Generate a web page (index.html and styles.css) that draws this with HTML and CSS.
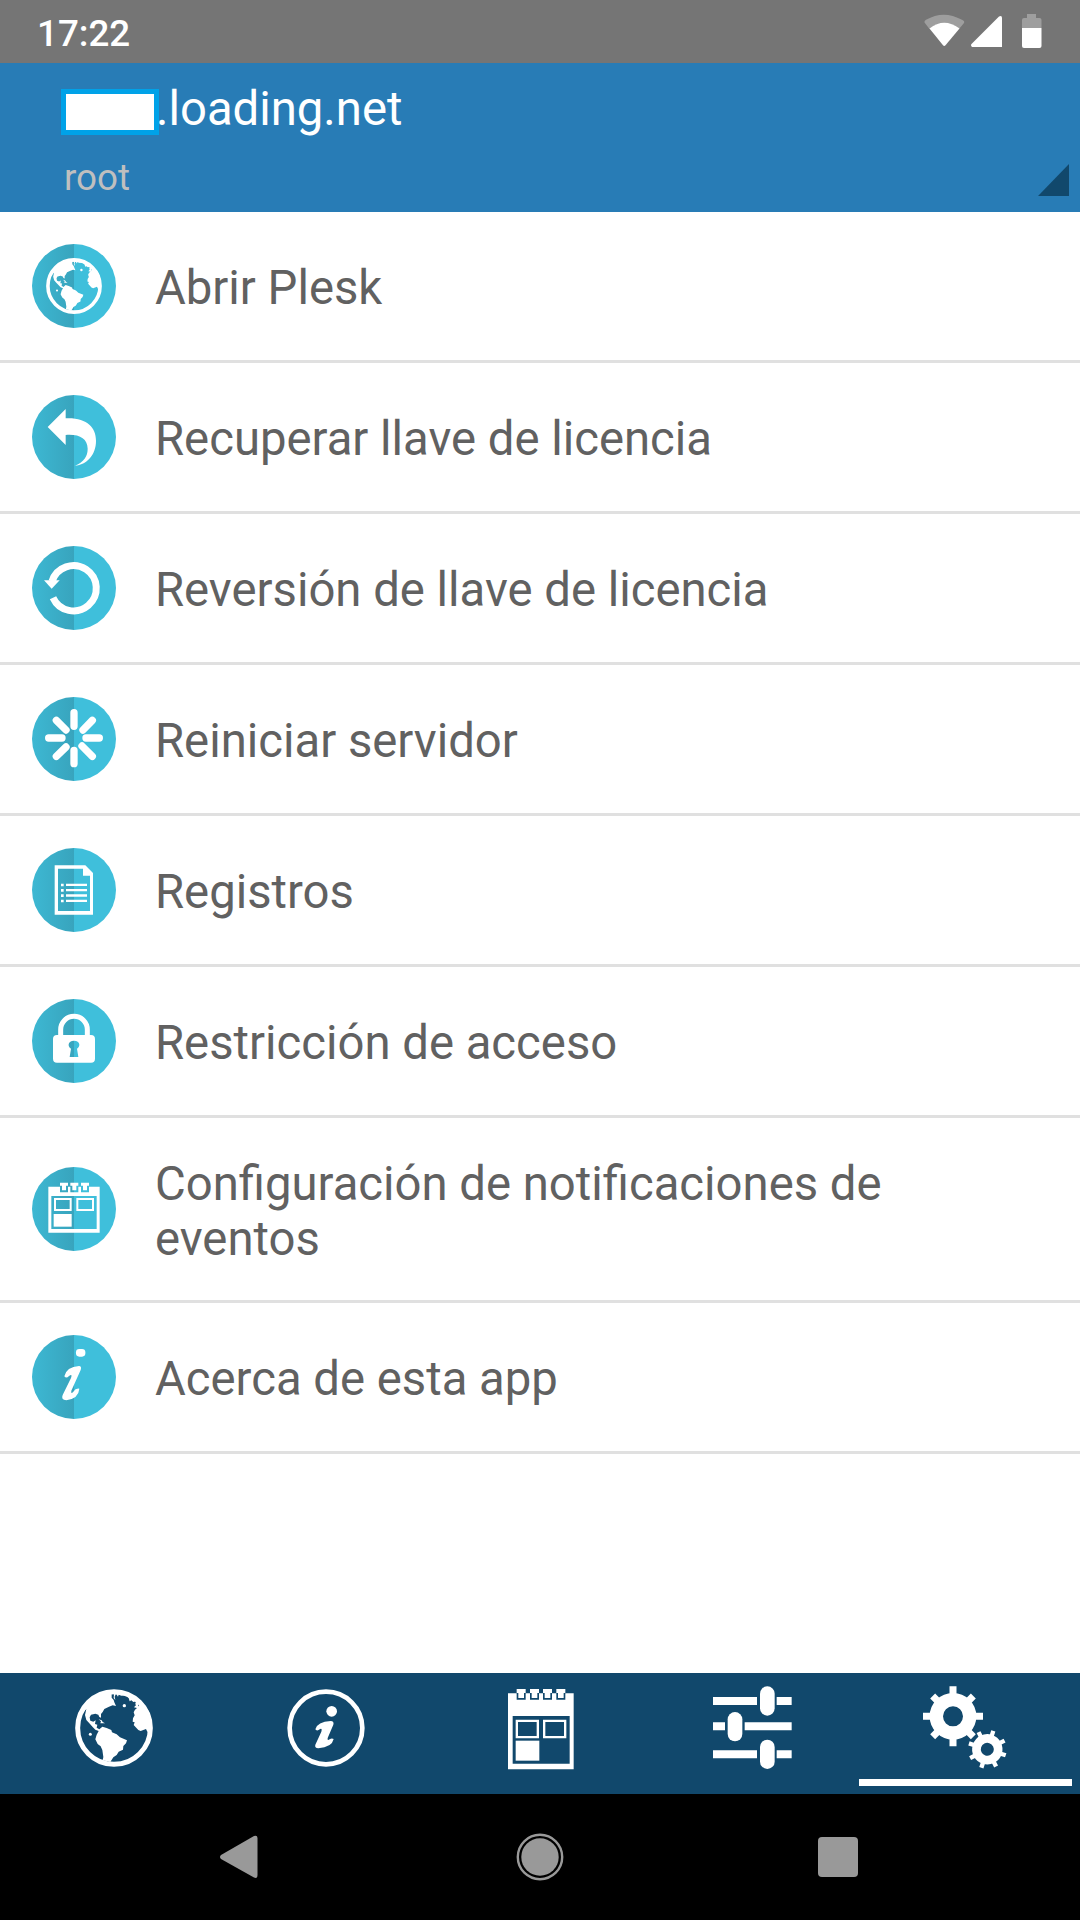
FILE: index.html
```html
<!DOCTYPE html>
<html lang="es">
<head>
    <meta charset="UTF-8">
    <meta name="viewport" content="width=device-width, initial-scale=1.0">
    <title>Plesk Mobile</title>
    <link rel="stylesheet" href="styles.css">
</head>
<body>

<svg class="defs" width="0" height="0">
    <symbol id="globe" viewBox="45 87 234 234">
        <circle cx="162" cy="204" r="109" fill="none" stroke="#fff" stroke-width="15"/>
        <path fill="#fff" d="M66 160 A110 110 0 0 1 250 132 L240 140 L234 132 L236 142 L228 140 L226 130 L229 124 L220 126 L214 121 L209 124 L206 114 L196 106 L184 107 L176 104 L174 110 L168 101 L164 110 L166 120 L161 114 L162 103 L155 102 L155 113 L161 120 L163 127 L168 138 L158 136 L147 140 L133 147 L128 156 L123 162 L123 173 L118 171 L115 164 L106 161 L93 164 L89 172 L91 182 L100 185 L107 181 L105 192 L112 194 L110 203 L118 208 L127 200 L140 204 L154 210 L156 217 L170 223 L180 232 L201 241 L198 250 L190 258 L189 269 L176 275 L170 285 L160 292 L151 306 L128 301 L130 291 L127 270 L122 259 L113 252 L106 238 L110 224 L116 213 L106 209 L98 201 L88 190 L79 180 L75 165 L79 147 L73 153Z"/>
        <path fill="#fff" d="M240 132 L264 150 Q277 175 275 211 L262 215 L258 207 L242 213 L235 210 L221 195 L224 187 L218 185 L219 175 L224 166 L221 157 L225 149 L231 144 L222 142 L226 137 L237 139Z"/>
        <path fill="#fff" d="M116 178 L125 181 L128 186 L135 190 L121 190 L123 184Z"/>
        <circle cx="193" cy="137" r="5" fill="#fff"/>
        <circle cx="91" cy="223" r="4.500" fill="#fff"/>
    </symbol>
</svg>

<div class="statusbar">
    <span class="time">17:22</span>
    <svg class="status-icons" width="120" height="36" viewBox="0 0 120 36">
        <path fill="#9e9e9e" d="M4.500 8.500 Q4 7 6 5.800 Q23.500 -4.500 42 5.800 Q45 7 44 9 L39 15 Q24 3 9.500 15Z"/>
        <path fill="#fff" d="M9.500 14.500 Q24 3 39.500 14.500 L25.500 31.300 Q24.200 32.500 23 31.300Z"/>
        <path fill="#fff" d="M79 2.500 Q82 1 82 4 V33 H52 Q50 31 52 29.500Z"/>
        <path fill="#9e9e9e" d="M107 0 H116 V4 H119.500 Q121.500 4 121.500 6 V14 H102 V6 Q102 4 104 4 H107Z"/>
        <path fill="#fff" d="M102 14 H121.500 V32 Q121.500 34 119.500 34 H104 Q102 34 102 32Z"/>
    </svg>
</div>

<header class="header">
    <div class="server">
        <div class="hostname"><span class="mask"></span>.loading.net</div>
        <div class="user">root</div>
    </div>
    <div class="corner"></div>
</header>

<main class="menu">
    <div class="item">
        <svg class="icon" viewBox="36 42 252 252">
            <use href="#globe" x="78" y="84" width="168" height="168"/>
        </svg>
        <span class="label">Abrir Plesk</span>
    </div>
    <div class="item">
        <svg class="icon" viewBox="36 495 252 252">
            <path fill="#fff" d="M83 591 L137 537 V565 C200 562 228 592 228 632 C228 675 200 704 165 707 C193 695 203 678 203 656 C202 625 178 612 137 615 V645Z"/>
        </svg>
        <span class="label">Recuperar llave de licencia</span>
    </div>
    <div class="item">
        <svg class="icon" viewBox="36 48 252 252">
            <path fill="none" stroke="#fff" stroke-width="21" d="M96 154 A68 68 0 1 1 99 203"/>
            <path fill="#fff" d="M72 151 H119 L95 176Z"/>
        </svg>
        <span class="label">Reversión de llave de licencia</span>
    </div>
    <div class="item">
        <svg class="icon" viewBox="36 501 252 252">
            <path fill="none" stroke="#fff" stroke-width="22" stroke-linecap="round" d="M162 548 V589 M162 661 V701 M86 624 H126 M198 624 H238 M109 571 L138 600 M186 648 L217 679 M109 679 L138 651 M189 600 L217 571"/>
        </svg>
        <span class="label">Reiniciar servidor</span>
    </div>
    <div class="item">
        <svg class="icon" viewBox="36 54 252 252">
            <path fill="#fff" fill-rule="evenodd" d="M104 106 H196 L219 129 V254 H104Z M114 116 V243 H210 V137 H189 V116Z"/>
            <path fill="#fff" d="M123 161h8v8h-8z M138 161h63v7h-63z M123 177h8v8h-8z M138 177h63v7h-63z M123 193h8v8h-8z M138 193h63v7h-63z M123 209h8v8h-8z M138 209h63v7h-63z"/>
        </svg>
        <span class="label">Registros</span>
    </div>
    <div class="item">
        <svg class="icon" viewBox="36 507 252 252">
            <path fill="none" stroke="#fff" stroke-width="15" d="M122 620 V599 A40 40 0 0 1 202 599 V620"/>
            <path fill="#fff" fill-rule="evenodd" d="M111 615 H213 Q225 615 225 627 V686 Q225 698 213 698 H111 Q99 698 99 686 V627 Q99 615 111 615Z M162 632 C143 632 142 649 153 656 L149 681 H175 L171 656 C182 649 181 632 162 632Z"/>
        </svg>
        <span class="label">Restricción de acceso</span>
    </div>
    <div class="item tall">
        <svg class="icon" viewBox="36 51 252 252">
            <path fill="#fff" fill-rule="evenodd" d="M85 110 H120 V127 H144 V110 H151 V127 H175 V110 H183 V127 H207 V110 H239 V248 H85Z M94 138 V237 H230 V138Z"/>
            <path fill="#fff" d="M120 98h24v9h-6v14h-12v-14h-6z M151 98h24v9h-6v14h-12v-14h-6z M183 98h24v9h-6v14h-12v-14h-6z"/>
            <path fill="none" stroke="#fff" stroke-width="6" d="M105 147h47v33h-47z M172 147h47v33h-47z"/>
            <rect x="101" y="192" width="54" height="38" fill="#fff"/>
        </svg>
        <span class="label">Configuración de notificaciones de eventos</span>
    </div>
    <div class="item">
        <svg class="icon" viewBox="36 555 252 252">
            <rect x="168" y="597" width="28" height="23" rx="10" fill="#fff"/>
            <path fill="#fff" d="M133 679 Q140 650 177 648 Q186 649 182 660 L154 722 Q152 735 160 725 Q167 714 178 716 Q176 745 139 751 Q122 750 128 735 L153 684 Q158 669 147 678 Q139 687 133 679Z"/>
        </svg>
        <span class="label">Acerca de esta app</span>
    </div>
</main>

<nav class="tabs">
    <div class="tab">
        <svg width="78" height="78"><use href="#globe"/></svg>
    </div>
    <div class="tab info">
        <svg width="78" height="78" viewBox="681 87 234 234">
            <circle cx="798" cy="204" r="109" fill="none" stroke="#fff" stroke-width="14"/>
            <circle cx="815" cy="154" r="16" fill="#fff"/>
            <path fill="#fff" d="M766 208 Q772 185 812 183 Q823 184 820 194 L803 234 Q801 244 809 238 Q815 234 821 237 Q816 262 775 265 Q763 264 766 254 L784 215 Q788 202 777 209 Q770 214 766 208Z"/>
        </svg>
    </div>
    <div class="tab calendar">
        <svg width="66" height="81" viewBox="52 86 198 243">
            <path fill="#fff" fill-rule="evenodd" d="M52 99 H78 V118 H105 V99 H118 V118 H145 V99 H157 V118 H184 V99 H197 V118 H224 V99 H249 V327 H52Z M66 167 V310 H237 V167Z"/>
            <path fill="#fff" d="M78 86h27v12h-5v15h-17v-15h-5z M118 86h27v12h-5v15h-17v-15h-5z M157 86h27v12h-5v15h-17v-15h-5z M197 86h27v12h-5v15h-17v-15h-5z"/>
            <path fill="none" stroke="#fff" stroke-width="7" d="M78.500 181.500h63v49h-63z M160.500 181.500h63v49h-63z"/>
            <rect x="75" y="241" width="71" height="60" fill="#fff"/>
        </svg>
    </div>
    <div class="tab">
        <svg width="80" height="84" viewBox="669 77 240 252">
            <path fill="#fff" d="M667 110h134v24h-134z M860 110h45v24h-45z M667 186h38v24h-38z M764 186h141v24h-141z M667 270h134v24h-134z M860 270h45v24h-45z"/>
            <rect x="810" y="78" width="44" height="88" rx="22" fill="#fff"/>
            <rect x="713" y="155" width="44" height="88" rx="22" fill="#fff"/>
            <rect x="810" y="238" width="44" height="88" rx="22" fill="#fff"/>
        </svg>
    </div>
    <div class="tab active">
        <svg width="84" height="84" viewBox="249 77 252 252">
            <circle cx="339" cy="168" r="50" fill="none" stroke="#fff" stroke-width="40"/>
            <path stroke="#fff" stroke-width="21" d="M339 78v30 M339 228v30 M249 168h30 M399 168h30 M278 107l20 20 M380 209l20 20 M278 229l20 -20 M380 127l20 -20"/>
            <g transform="rotate(18 442 267)" fill="none" stroke="#fff">
                <circle cx="442" cy="267" r="32.500" stroke-width="26"/>
                <path stroke-width="13" d="M442 209v18 M442 307v18 M384 267h18 M482 267h18 M401 226l12 12 M471 296l12 12 M401 308l12 -12 M471 238l12 -12"/>
            </g>
        </svg>
    </div>
</nav>

<footer class="navbar">
    <svg width="38" height="44" viewBox="0 0 38 44">
        <path fill="#999" d="M1 20 L34 1 Q37.500 0 37.500 3 V40 Q37.500 44 34 42.500 L1 24 Q-1 22 1 20Z"/>
    </svg>
    <svg class="home" width="48" height="48" viewBox="0 0 48 48">
        <circle cx="24" cy="24" r="22.200" fill="none" stroke="#999" stroke-width="2.400"/>
        <circle cx="24" cy="24" r="18.700" fill="#999"/>
    </svg>
    <svg width="40" height="40">
        <rect width="40" height="40" rx="4" fill="#999"/>
    </svg>
</footer>

</body>
</html>
```
FILE: styles.css
```css
* {
    box-sizing: border-box;
}
body {
    margin: 0;
    width: 1080px;
    height: 1920px;
    display: flex;
    flex-direction: column;
    font-family: Roboto, sans-serif;
    background-color: #ffffff;
    overflow: hidden;
}
svg {
    display: block;
    flex: none;
}
.defs {
    position: absolute;
}
.statusbar {
    height: 63px;
    padding: 0 38px 0 37px;
    display: flex;
    justify-content: space-between;
    background-color: #757575;
    color: #ffffff;
}
.time {
    font-size: 36.75px;
    font-weight: 500;
    line-height: 67px;
}
.status-icons {
    margin-top: 14px;
    margin-right: 2px;
    overflow: visible;
}
.header {
    height: 149px;
    padding: 0 11px 16px 61px;
    display: flex;
    justify-content: space-between;
    align-items: flex-end;
    background-color: #287cb6;
}
.server {
    align-self: flex-start;
    padding-top: 18px;
}
.hostname {
    display: flex;
    height: 56px;
    font-size: 47.25px;
    line-height: 56px;
    color: #ffffff;
}
.mask {
    width: 98px;
    height: 46px;
    margin-top: 8px;
    margin-right: -3px;
    border: 5px solid #00a2e8;
    background-color: #ffffff;
}
.user {
    margin-top: 20px;
    padding-left: 3px;
    font-size: 36.75px;
    line-height: 42px;
    color: #bfbfbf;
}
.corner {
    width: 31px;
    height: 32px;
    background-color: #11486c;
    clip-path: polygon(100% 0, 100% 100%, 0 100%);
}
.menu {
    flex: 1;
}
.item {
    height: 151px;
    padding: 0 120px 0 32px;
    display: flex;
    align-items: center;
    gap: 39px;
    border-bottom: 3px solid #e0e0e0;
}
.tall {
    height: 185px;
}
.icon {
    width: 84px;
    height: 84px;
    border-radius: 50%;
    background: linear-gradient(to right, #3db8d3 0, #38a4bd 50%, #3fbfdb 50%);
}
.label {
    padding-top: 5px;
    font-size: 47.25px;
    line-height: 55px;
    color: #616161;
}
.tabs {
    height: 121px;
    padding: 0 8px;
    display: flex;
    background-color: #11486c;
}
.tab {
    flex: 1;
    height: 113px;
    padding-bottom: 3px;
    display: flex;
    justify-content: center;
    align-items: center;
}
.info {
    padding-right: 2px;
}
.calendar {
    padding-bottom: 0;
}
.active {
    padding: 3px 1px 0 0;
    border-bottom: 7px solid #ffffff;
}
.navbar {
    height: 126px;
    padding: 0 222px 0 220px;
    display: flex;
    justify-content: space-between;
    align-items: center;
    background-color: #000000;
}
.home {
    margin-left: 3px;
}
```
